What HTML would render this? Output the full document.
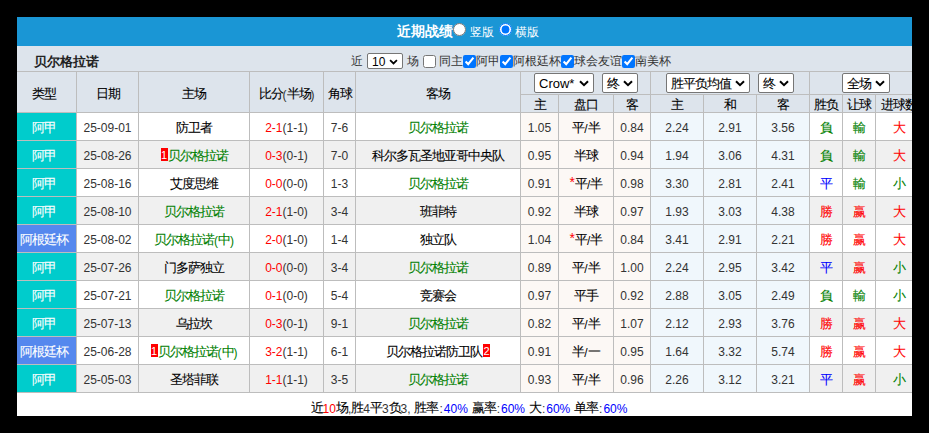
<!DOCTYPE html>
<html><head><meta charset="utf-8">
<style>
html,body{margin:0;padding:0;background:#000;width:929px;height:433px;overflow:hidden}
body{font-family:"Liberation Sans",sans-serif;font-size:12px;color:#333}
.c .z{color:#000}
.c.g .z{color:inherit}
#p{position:absolute;left:17px;top:17px;width:895px;height:399px;background:#fff;overflow:hidden}
.a{position:absolute;white-space:nowrap}
.c{position:absolute;text-align:center;white-space:nowrap;line-height:27px;height:27px;box-sizing:border-box;padding-top:2px}
i.co{font-style:normal;margin:0 1px}
.z{font-size:13px;letter-spacing:-1px;position:relative;top:-1px;-webkit-text-stroke:0.1px}
.vl{position:absolute;width:1px;background:#bdbdbd}
.hl{position:absolute;height:1px;background:#bdbdbd}
.bd{display:inline-block;margin-left:0;background:#f00;color:#fff;font-weight:normal;font-size:11px;line-height:14px;height:13px;width:7px;text-align:center;vertical-align:0px;letter-spacing:0;margin-right:0;overflow:hidden}
.sl{position:absolute;box-sizing:border-box;border:1px solid #767676;border-radius:2px;background:#fff;color:#000}
.sl span.t{position:absolute;left:4px;top:1px;white-space:nowrap}
.sl svg{position:absolute}
.sl .z{top:0}
input[type=checkbox]{position:absolute;margin:0;width:13px;height:13px}
input[type=radio]{position:absolute;margin:0;width:13px;height:13px}
</style></head><body><div id="p">

<div class="a" style="left:0px;top:0px;width:895px;height:29px;background:#1a96d5"></div>
<div class="a" style="left:380px;top:4px;color:#fff;font-weight:bold;font-size:14px;line-height:20px">近期战绩</div>
<input type="radio" name="r" style="left:436px;top:6px">
<div class="a" style="left:453px;top:5px;color:#fff;font-size:12px;line-height:20px">竖版</div>
<input type="radio" name="r" checked style="left:482px;top:6px">
<div class="a" style="left:498px;top:5px;color:#fff;font-size:12px;line-height:20px">横版</div>
<div class="a" style="left:0px;top:29px;width:895px;height:25px;background:#dde4ec"></div>
<div class="a" style="left:17px;top:36px;font-weight:bold;font-size:13px;line-height:18px;color:#222;font-family:'Liberation Serif',serif">贝尔格拉诺</div>
<div class="a" style="left:334px;top:35px;font-size:12px;line-height:18px;color:#333">近</div>
<div class="sl" style="left:350px;top:36px;width:36px;height:16px"><span class="t" style="left:4px;font-size:12px;line-height:14px">10</span><svg width="9" height="6" style="left:21px;top:5px" viewBox="0 0 10 7"><path d="M1 1.2 L5 5.2 L9 1.2" fill="none" stroke="#000" stroke-width="2"/></svg></div>
<div class="a" style="left:390px;top:35px;font-size:12px;line-height:18px;color:#333">场</div>
<input type="checkbox"  style="left:406px;top:38px">
<div class="a" style="left:422px;top:35px;font-size:12px;line-height:18px;color:#333">同主</div>
<input type="checkbox" checked style="left:446px;top:38px">
<div class="a" style="left:459px;top:35px;font-size:12px;line-height:18px;color:#333">阿甲</div>
<input type="checkbox" checked style="left:483px;top:38px">
<div class="a" style="left:496px;top:35px;font-size:12px;line-height:18px;color:#333">阿根廷杯</div>
<input type="checkbox" checked style="left:544px;top:38px">
<div class="a" style="left:557px;top:35px;font-size:12px;line-height:18px;color:#333">球会友谊</div>
<input type="checkbox" checked style="left:605px;top:38px">
<div class="a" style="left:618px;top:35px;font-size:12px;line-height:18px;color:#333">南美杯</div>
<div class="a" style="left:0px;top:55px;width:904px;height:40px;background:#dde4ec"></div>
<div class="hl" style="left:0;top:54px;width:904px"></div>
<div class="hl" style="left:503px;top:77px;width:401px"></div>
<div class="hl" style="left:0;top:95px;width:904px"></div>
<div class="hl" style="left:0;top:123px;width:904px"></div>
<div class="hl" style="left:0;top:151px;width:904px"></div>
<div class="hl" style="left:0;top:179px;width:904px"></div>
<div class="hl" style="left:0;top:207px;width:904px"></div>
<div class="hl" style="left:0;top:235px;width:904px"></div>
<div class="hl" style="left:0;top:263px;width:904px"></div>
<div class="hl" style="left:0;top:291px;width:904px"></div>
<div class="hl" style="left:0;top:319px;width:904px"></div>
<div class="hl" style="left:0;top:347px;width:904px"></div>
<div class="hl" style="left:0;top:375px;width:904px"></div>
<div class="vl" style="left:59px;top:54px;height:321px"></div>
<div class="vl" style="left:121px;top:54px;height:321px"></div>
<div class="vl" style="left:232px;top:54px;height:321px"></div>
<div class="vl" style="left:306px;top:54px;height:321px"></div>
<div class="vl" style="left:338px;top:54px;height:321px"></div>
<div class="vl" style="left:503px;top:54px;height:321px"></div>
<div class="vl" style="left:541px;top:77px;height:298px"></div>
<div class="vl" style="left:596px;top:77px;height:298px"></div>
<div class="vl" style="left:633px;top:54px;height:321px"></div>
<div class="vl" style="left:686px;top:77px;height:298px"></div>
<div class="vl" style="left:739px;top:77px;height:298px"></div>
<div class="vl" style="left:792px;top:54px;height:321px"></div>
<div class="vl" style="left:825px;top:77px;height:298px"></div>
<div class="vl" style="left:858px;top:77px;height:298px"></div>
<div class="c" style="left:-5px;top:56px;width:64px;line-height:40px;height:40px"><span class="z">类型</span></div>
<div class="c" style="left:60px;top:56px;width:61px;line-height:40px;height:40px"><span class="z">日期</span></div>
<div class="c" style="left:122px;top:56px;width:110px;line-height:40px;height:40px"><span class="z">主场</span></div>
<div class="c" style="left:233px;top:56px;width:73px;line-height:40px;height:40px"><span class="z">比分</span>(<span class="z">半场</span>)</div>
<div class="c" style="left:307px;top:56px;width:31px;line-height:40px;height:40px"><span class="z">角球</span></div>
<div class="c" style="left:339px;top:56px;width:164px;line-height:40px;height:40px"><span class="z">客场</span></div>
<div class="c" style="left:504px;top:78px;width:37px;line-height:17px;height:17px"><span class="z">主</span></div>
<div class="c" style="left:542px;top:78px;width:54px;line-height:17px;height:17px"><span class="z">盘口</span></div>
<div class="c" style="left:597px;top:78px;width:36px;line-height:17px;height:17px"><span class="z">客</span></div>
<div class="c" style="left:634px;top:78px;width:52px;line-height:17px;height:17px"><span class="z">主</span></div>
<div class="c" style="left:687px;top:78px;width:52px;line-height:17px;height:17px"><span class="z">和</span></div>
<div class="c" style="left:740px;top:78px;width:52px;line-height:17px;height:17px"><span class="z">客</span></div>
<div class="c" style="left:793px;top:78px;width:32px;line-height:17px;height:17px"><span class="z">胜负</span></div>
<div class="c" style="left:826px;top:78px;width:32px;line-height:17px;height:17px"><span class="z">让球</span></div>
<div class="c" style="left:859px;top:78px;width:45px;line-height:17px;height:17px"><span class="z">进球数</span></div>
<div class="sl" style="left:517px;top:56px;width:60px;height:20px"><span class="t" style="left:4px;font-size:13px;line-height:18px">Crow*</span><svg width="10" height="7" style="left:44px;top:6px" viewBox="0 0 10 7"><path d="M1 1.2 L5 5.2 L9 1.2" fill="none" stroke="#000" stroke-width="2"/></svg></div>
<div class="sl" style="left:585px;top:56px;width:36px;height:20px"><span class="t" style="left:4px;font-size:13px;line-height:18px"><span class="z">终</span></span><svg width="10" height="7" style="left:20px;top:6px" viewBox="0 0 10 7"><path d="M1 1.2 L5 5.2 L9 1.2" fill="none" stroke="#000" stroke-width="2"/></svg></div>
<div class="sl" style="left:649px;top:56px;width:84px;height:20px"><span class="t" style="left:4px;font-size:13px;line-height:18px"><span class="z">胜平负均值</span></span><svg width="10" height="7" style="left:68px;top:6px" viewBox="0 0 10 7"><path d="M1 1.2 L5 5.2 L9 1.2" fill="none" stroke="#000" stroke-width="2"/></svg></div>
<div class="sl" style="left:741px;top:56px;width:36px;height:20px"><span class="t" style="left:4px;font-size:13px;line-height:18px"><span class="z">终</span></span><svg width="10" height="7" style="left:20px;top:6px" viewBox="0 0 10 7"><path d="M1 1.2 L5 5.2 L9 1.2" fill="none" stroke="#000" stroke-width="2"/></svg></div>
<div class="sl" style="left:825px;top:56px;width:48px;height:20px"><span class="t" style="left:4px;font-size:13px;line-height:18px"><span class="z">全场</span></span><svg width="10" height="7" style="left:32px;top:6px" viewBox="0 0 10 7"><path d="M1 1.2 L5 5.2 L9 1.2" fill="none" stroke="#000" stroke-width="2"/></svg></div>
<div class="c g" style="left:-5px;top:96px;width:64px;background:#00cccc;color:#fff;"><span class="z">阿甲</span></div>
<div class="c" style="left:60px;top:96px;width:61px;background:#fff;">25-09-01</div>
<div class="c" style="left:122px;top:96px;width:110px;background:#fff;color:#000;"><span class="z">防卫者</span></div>
<div class="c" style="left:233px;top:96px;width:73px;background:#fff;"><span style="color:#f00">2-1</span>(1-1)</div>
<div class="c" style="left:307px;top:96px;width:31px;background:#fff;">7-6</div>
<div class="c g" style="left:339px;top:96px;width:164px;background:#fff;color:#008000;"><span class="z">贝尔格拉诺</span></div>
<div class="c" style="left:504px;top:96px;width:37px;background:#fcf8f5;">1.05</div>
<div class="c" style="left:542px;top:96px;width:54px;background:#fcf8f5;color:#000;"><span class="z">平</span>/<span class="z">半</span></div>
<div class="c" style="left:597px;top:96px;width:36px;background:#fcf8f5;">0.84</div>
<div class="c" style="left:634px;top:96px;width:52px;background:#f0f7fc;">2.24</div>
<div class="c" style="left:687px;top:96px;width:52px;background:#f0f7fc;">2.91</div>
<div class="c" style="left:740px;top:96px;width:52px;background:#f0f7fc;">3.56</div>
<div class="c g" style="left:793px;top:96px;width:32px;background:#fff;color:#008000;"><span class="z">負</span></div>
<div class="c g" style="left:826px;top:96px;width:32px;background:#fff;color:#008000;"><span class="z">輸</span></div>
<div class="c g" style="left:859px;top:96px;width:45px;background:#fff;color:#ff0000;"><span class="z">大</span></div>
<div class="c g" style="left:-5px;top:124px;width:64px;background:#00cccc;color:#fff;"><span class="z">阿甲</span></div>
<div class="c" style="left:60px;top:124px;width:61px;background:#f0f0f0;">25-08-26</div>
<div class="c g" style="left:122px;top:124px;width:110px;background:#f0f0f0;color:#008000;"><span class="bd">1</span><span class="z">贝尔格拉诺</span></div>
<div class="c" style="left:233px;top:124px;width:73px;background:#f0f0f0;"><span style="color:#f00">0-3</span>(0-1)</div>
<div class="c" style="left:307px;top:124px;width:31px;background:#f0f0f0;">7-0</div>
<div class="c" style="left:339px;top:124px;width:164px;background:#f0f0f0;color:#000;"><span class="z">科尔多瓦圣地亚哥中央队</span></div>
<div class="c" style="left:504px;top:124px;width:37px;background:#fcf8f5;">0.95</div>
<div class="c" style="left:542px;top:124px;width:54px;background:#fcf8f5;color:#000;"><span class="z">半球</span></div>
<div class="c" style="left:597px;top:124px;width:36px;background:#fcf8f5;">0.94</div>
<div class="c" style="left:634px;top:124px;width:52px;background:#f0f7fc;">1.94</div>
<div class="c" style="left:687px;top:124px;width:52px;background:#f0f7fc;">3.06</div>
<div class="c" style="left:740px;top:124px;width:52px;background:#f0f7fc;">4.31</div>
<div class="c g" style="left:793px;top:124px;width:32px;background:#f0f0f0;color:#008000;"><span class="z">負</span></div>
<div class="c g" style="left:826px;top:124px;width:32px;background:#f0f0f0;color:#008000;"><span class="z">輸</span></div>
<div class="c g" style="left:859px;top:124px;width:45px;background:#f0f0f0;color:#ff0000;"><span class="z">大</span></div>
<div class="c g" style="left:-5px;top:152px;width:64px;background:#00cccc;color:#fff;"><span class="z">阿甲</span></div>
<div class="c" style="left:60px;top:152px;width:61px;background:#fff;">25-08-16</div>
<div class="c" style="left:122px;top:152px;width:110px;background:#fff;color:#000;"><span class="z">艾度思维</span></div>
<div class="c" style="left:233px;top:152px;width:73px;background:#fff;"><span style="color:#f00">0-0</span>(0-0)</div>
<div class="c" style="left:307px;top:152px;width:31px;background:#fff;">1-3</div>
<div class="c g" style="left:339px;top:152px;width:164px;background:#fff;color:#008000;"><span class="z">贝尔格拉诺</span></div>
<div class="c" style="left:504px;top:152px;width:37px;background:#fcf8f5;">0.91</div>
<div class="c" style="left:542px;top:152px;width:54px;background:#fcf8f5;color:#000;"><span style="color:#f00;font-size:14px;position:relative;top:-2px">*</span><span class="z">平</span>/<span class="z">半</span></div>
<div class="c" style="left:597px;top:152px;width:36px;background:#fcf8f5;">0.98</div>
<div class="c" style="left:634px;top:152px;width:52px;background:#f0f7fc;">3.30</div>
<div class="c" style="left:687px;top:152px;width:52px;background:#f0f7fc;">2.81</div>
<div class="c" style="left:740px;top:152px;width:52px;background:#f0f7fc;">2.41</div>
<div class="c g" style="left:793px;top:152px;width:32px;background:#fff;color:#0000ff;"><span class="z">平</span></div>
<div class="c g" style="left:826px;top:152px;width:32px;background:#fff;color:#008000;"><span class="z">輸</span></div>
<div class="c g" style="left:859px;top:152px;width:45px;background:#fff;color:#008000;"><span class="z">小</span></div>
<div class="c g" style="left:-5px;top:180px;width:64px;background:#00cccc;color:#fff;"><span class="z">阿甲</span></div>
<div class="c" style="left:60px;top:180px;width:61px;background:#f0f0f0;">25-08-10</div>
<div class="c g" style="left:122px;top:180px;width:110px;background:#f0f0f0;color:#008000;"><span class="z">贝尔格拉诺</span></div>
<div class="c" style="left:233px;top:180px;width:73px;background:#f0f0f0;"><span style="color:#f00">2-1</span>(1-0)</div>
<div class="c" style="left:307px;top:180px;width:31px;background:#f0f0f0;">3-4</div>
<div class="c" style="left:339px;top:180px;width:164px;background:#f0f0f0;color:#000;"><span class="z">班菲特</span></div>
<div class="c" style="left:504px;top:180px;width:37px;background:#fcf8f5;">0.92</div>
<div class="c" style="left:542px;top:180px;width:54px;background:#fcf8f5;color:#000;"><span class="z">半球</span></div>
<div class="c" style="left:597px;top:180px;width:36px;background:#fcf8f5;">0.97</div>
<div class="c" style="left:634px;top:180px;width:52px;background:#f0f7fc;">1.93</div>
<div class="c" style="left:687px;top:180px;width:52px;background:#f0f7fc;">3.03</div>
<div class="c" style="left:740px;top:180px;width:52px;background:#f0f7fc;">4.38</div>
<div class="c g" style="left:793px;top:180px;width:32px;background:#f0f0f0;color:#ff0000;"><span class="z">勝</span></div>
<div class="c g" style="left:826px;top:180px;width:32px;background:#f0f0f0;color:#ff0000;"><span class="z">赢</span></div>
<div class="c g" style="left:859px;top:180px;width:45px;background:#f0f0f0;color:#ff0000;"><span class="z">大</span></div>
<div class="c g" style="left:-5px;top:208px;width:64px;background:#5588ee;color:#fff;"><span class="z">阿根廷杯</span></div>
<div class="c" style="left:60px;top:208px;width:61px;background:#fff;">25-08-02</div>
<div class="c g" style="left:122px;top:208px;width:110px;background:#fff;color:#008000;"><span class="z">贝尔格拉诺</span>(<span class="z">中</span>)</div>
<div class="c" style="left:233px;top:208px;width:73px;background:#fff;"><span style="color:#f00">2-0</span>(1-0)</div>
<div class="c" style="left:307px;top:208px;width:31px;background:#fff;">1-4</div>
<div class="c" style="left:339px;top:208px;width:164px;background:#fff;color:#000;"><span class="z">独立队</span></div>
<div class="c" style="left:504px;top:208px;width:37px;background:#fcf8f5;">1.04</div>
<div class="c" style="left:542px;top:208px;width:54px;background:#fcf8f5;color:#000;"><span style="color:#f00;font-size:14px;position:relative;top:-2px">*</span><span class="z">平</span>/<span class="z">半</span></div>
<div class="c" style="left:597px;top:208px;width:36px;background:#fcf8f5;">0.84</div>
<div class="c" style="left:634px;top:208px;width:52px;background:#f0f7fc;">3.41</div>
<div class="c" style="left:687px;top:208px;width:52px;background:#f0f7fc;">2.91</div>
<div class="c" style="left:740px;top:208px;width:52px;background:#f0f7fc;">2.21</div>
<div class="c g" style="left:793px;top:208px;width:32px;background:#fff;color:#ff0000;"><span class="z">勝</span></div>
<div class="c g" style="left:826px;top:208px;width:32px;background:#fff;color:#ff0000;"><span class="z">赢</span></div>
<div class="c g" style="left:859px;top:208px;width:45px;background:#fff;color:#ff0000;"><span class="z">大</span></div>
<div class="c g" style="left:-5px;top:236px;width:64px;background:#00cccc;color:#fff;"><span class="z">阿甲</span></div>
<div class="c" style="left:60px;top:236px;width:61px;background:#f0f0f0;">25-07-26</div>
<div class="c" style="left:122px;top:236px;width:110px;background:#f0f0f0;color:#000;"><span class="z">门多萨独立</span></div>
<div class="c" style="left:233px;top:236px;width:73px;background:#f0f0f0;"><span style="color:#f00">0-0</span>(0-0)</div>
<div class="c" style="left:307px;top:236px;width:31px;background:#f0f0f0;">3-4</div>
<div class="c g" style="left:339px;top:236px;width:164px;background:#f0f0f0;color:#008000;"><span class="z">贝尔格拉诺</span></div>
<div class="c" style="left:504px;top:236px;width:37px;background:#fcf8f5;">0.89</div>
<div class="c" style="left:542px;top:236px;width:54px;background:#fcf8f5;color:#000;"><span class="z">平</span>/<span class="z">半</span></div>
<div class="c" style="left:597px;top:236px;width:36px;background:#fcf8f5;">1.00</div>
<div class="c" style="left:634px;top:236px;width:52px;background:#f0f7fc;">2.24</div>
<div class="c" style="left:687px;top:236px;width:52px;background:#f0f7fc;">2.95</div>
<div class="c" style="left:740px;top:236px;width:52px;background:#f0f7fc;">3.42</div>
<div class="c g" style="left:793px;top:236px;width:32px;background:#f0f0f0;color:#0000ff;"><span class="z">平</span></div>
<div class="c g" style="left:826px;top:236px;width:32px;background:#f0f0f0;color:#ff0000;"><span class="z">赢</span></div>
<div class="c g" style="left:859px;top:236px;width:45px;background:#f0f0f0;color:#008000;"><span class="z">小</span></div>
<div class="c g" style="left:-5px;top:264px;width:64px;background:#00cccc;color:#fff;"><span class="z">阿甲</span></div>
<div class="c" style="left:60px;top:264px;width:61px;background:#fff;">25-07-21</div>
<div class="c g" style="left:122px;top:264px;width:110px;background:#fff;color:#008000;"><span class="z">贝尔格拉诺</span></div>
<div class="c" style="left:233px;top:264px;width:73px;background:#fff;"><span style="color:#f00">0-1</span>(0-0)</div>
<div class="c" style="left:307px;top:264px;width:31px;background:#fff;">5-4</div>
<div class="c" style="left:339px;top:264px;width:164px;background:#fff;color:#000;"><span class="z">竞赛会</span></div>
<div class="c" style="left:504px;top:264px;width:37px;background:#fcf8f5;">0.97</div>
<div class="c" style="left:542px;top:264px;width:54px;background:#fcf8f5;color:#000;"><span class="z">平手</span></div>
<div class="c" style="left:597px;top:264px;width:36px;background:#fcf8f5;">0.92</div>
<div class="c" style="left:634px;top:264px;width:52px;background:#f0f7fc;">2.88</div>
<div class="c" style="left:687px;top:264px;width:52px;background:#f0f7fc;">3.05</div>
<div class="c" style="left:740px;top:264px;width:52px;background:#f0f7fc;">2.49</div>
<div class="c g" style="left:793px;top:264px;width:32px;background:#fff;color:#008000;"><span class="z">負</span></div>
<div class="c g" style="left:826px;top:264px;width:32px;background:#fff;color:#008000;"><span class="z">輸</span></div>
<div class="c g" style="left:859px;top:264px;width:45px;background:#fff;color:#008000;"><span class="z">小</span></div>
<div class="c g" style="left:-5px;top:292px;width:64px;background:#00cccc;color:#fff;"><span class="z">阿甲</span></div>
<div class="c" style="left:60px;top:292px;width:61px;background:#f0f0f0;">25-07-13</div>
<div class="c" style="left:122px;top:292px;width:110px;background:#f0f0f0;color:#000;"><span class="z">乌拉坎</span></div>
<div class="c" style="left:233px;top:292px;width:73px;background:#f0f0f0;"><span style="color:#f00">0-3</span>(0-1)</div>
<div class="c" style="left:307px;top:292px;width:31px;background:#f0f0f0;">9-1</div>
<div class="c g" style="left:339px;top:292px;width:164px;background:#f0f0f0;color:#008000;"><span class="z">贝尔格拉诺</span></div>
<div class="c" style="left:504px;top:292px;width:37px;background:#fcf8f5;">0.82</div>
<div class="c" style="left:542px;top:292px;width:54px;background:#fcf8f5;color:#000;"><span class="z">平</span>/<span class="z">半</span></div>
<div class="c" style="left:597px;top:292px;width:36px;background:#fcf8f5;">1.07</div>
<div class="c" style="left:634px;top:292px;width:52px;background:#f0f7fc;">2.12</div>
<div class="c" style="left:687px;top:292px;width:52px;background:#f0f7fc;">2.93</div>
<div class="c" style="left:740px;top:292px;width:52px;background:#f0f7fc;">3.76</div>
<div class="c g" style="left:793px;top:292px;width:32px;background:#f0f0f0;color:#ff0000;"><span class="z">勝</span></div>
<div class="c g" style="left:826px;top:292px;width:32px;background:#f0f0f0;color:#ff0000;"><span class="z">赢</span></div>
<div class="c g" style="left:859px;top:292px;width:45px;background:#f0f0f0;color:#ff0000;"><span class="z">大</span></div>
<div class="c g" style="left:-5px;top:320px;width:64px;background:#5588ee;color:#fff;"><span class="z">阿根廷杯</span></div>
<div class="c" style="left:60px;top:320px;width:61px;background:#fff;">25-06-28</div>
<div class="c g" style="left:122px;top:320px;width:110px;background:#fff;color:#008000;"><span class="bd">1</span><span class="z">贝尔格拉诺</span>(<span class="z">中</span>)</div>
<div class="c" style="left:233px;top:320px;width:73px;background:#fff;"><span style="color:#f00">3-2</span>(1-1)</div>
<div class="c" style="left:307px;top:320px;width:31px;background:#fff;">6-1</div>
<div class="c" style="left:339px;top:320px;width:164px;background:#fff;color:#000;"><span class="z">贝尔格拉诺防卫队</span><span class="bd" style="margin-left:1px">2</span></div>
<div class="c" style="left:504px;top:320px;width:37px;background:#fcf8f5;">0.91</div>
<div class="c" style="left:542px;top:320px;width:54px;background:#fcf8f5;color:#000;"><span class="z">半</span>/<span class="z">一</span></div>
<div class="c" style="left:597px;top:320px;width:36px;background:#fcf8f5;">0.95</div>
<div class="c" style="left:634px;top:320px;width:52px;background:#f0f7fc;">1.64</div>
<div class="c" style="left:687px;top:320px;width:52px;background:#f0f7fc;">3.32</div>
<div class="c" style="left:740px;top:320px;width:52px;background:#f0f7fc;">5.74</div>
<div class="c g" style="left:793px;top:320px;width:32px;background:#fff;color:#ff0000;"><span class="z">勝</span></div>
<div class="c g" style="left:826px;top:320px;width:32px;background:#fff;color:#ff0000;"><span class="z">赢</span></div>
<div class="c g" style="left:859px;top:320px;width:45px;background:#fff;color:#ff0000;"><span class="z">大</span></div>
<div class="c g" style="left:-5px;top:348px;width:64px;background:#00cccc;color:#fff;"><span class="z">阿甲</span></div>
<div class="c" style="left:60px;top:348px;width:61px;background:#f0f0f0;">25-05-03</div>
<div class="c" style="left:122px;top:348px;width:110px;background:#f0f0f0;color:#000;"><span class="z">圣塔菲联</span></div>
<div class="c" style="left:233px;top:348px;width:73px;background:#f0f0f0;"><span style="color:#f00">1-1</span>(1-1)</div>
<div class="c" style="left:307px;top:348px;width:31px;background:#f0f0f0;">3-5</div>
<div class="c g" style="left:339px;top:348px;width:164px;background:#f0f0f0;color:#008000;"><span class="z">贝尔格拉诺</span></div>
<div class="c" style="left:504px;top:348px;width:37px;background:#fcf8f5;">0.93</div>
<div class="c" style="left:542px;top:348px;width:54px;background:#fcf8f5;color:#000;"><span class="z">平</span>/<span class="z">半</span></div>
<div class="c" style="left:597px;top:348px;width:36px;background:#fcf8f5;">0.96</div>
<div class="c" style="left:634px;top:348px;width:52px;background:#f0f7fc;">2.26</div>
<div class="c" style="left:687px;top:348px;width:52px;background:#f0f7fc;">3.12</div>
<div class="c" style="left:740px;top:348px;width:52px;background:#f0f7fc;">3.21</div>
<div class="c g" style="left:793px;top:348px;width:32px;background:#f0f0f0;color:#0000ff;"><span class="z">平</span></div>
<div class="c g" style="left:826px;top:348px;width:32px;background:#f0f0f0;color:#ff0000;"><span class="z">赢</span></div>
<div class="c g" style="left:859px;top:348px;width:45px;background:#f0f0f0;color:#008000;"><span class="z">小</span></div>
<div class="c" style="left:-2px;top:378px;width:908px;line-height:24px;height:24px;word-spacing:0.5px"><span class="z">近</span><span style="color:#f00">10</span><span class="z">场</span>,<span class="z">胜</span>4<span class="z">平</span>3<span class="z">负</span>3, <span class="z">胜率</span><i class="co">:</i><span style="color:#00f">40%</span> <span class="z">赢率</span><i class="co">:</i><span style="color:#00f">60%</span> <span class="z">大</span><i class="co">:</i><span style="color:#00f">60%</span> <span class="z">单率</span><i class="co">:</i><span style="color:#00f">60%</span></div>
</div></body></html>
